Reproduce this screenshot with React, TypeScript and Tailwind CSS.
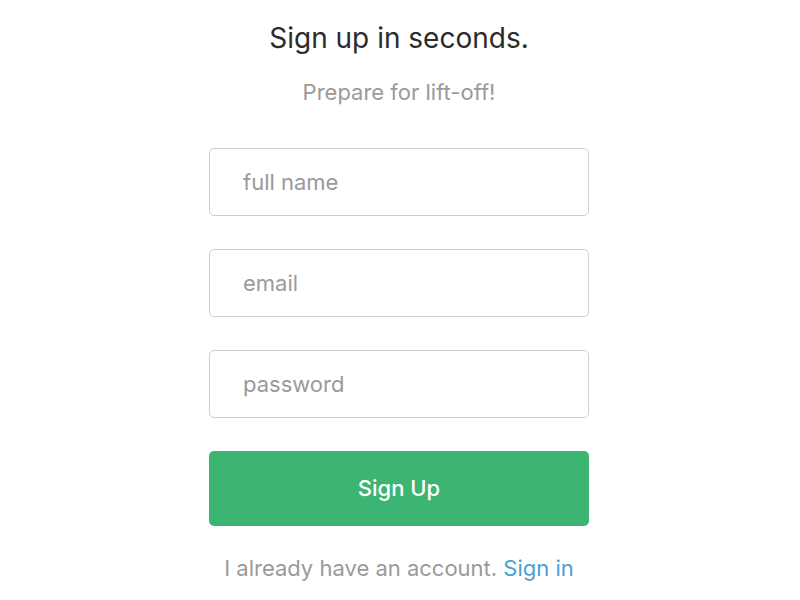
import React from 'react';

const Field = (props: { placeholder: string; type?: string }) => {
  return (
    <input
      type={props.type || 'text'}
      placeholder={props.placeholder}
      className="block w-full h-[68px] rounded-[5px] border border-[#cfcfcf] bg-white px-[33px] text-[22px] text-[#333] placeholder:text-[#9a9a9a] outline-none"
    />
  );
};

export default function App() {
  return (
    <div
      className="min-h-[600px] bg-white flex flex-col items-center pr-[2px]"
      style={{ fontFamily: 'Inter, "Noto Sans", sans-serif' }}
    >
      <h1 className="mt-[20px] text-[28px] leading-[36px] text-[#2b2b2b]">Sign up in seconds.</h1>
      <p className="mt-[22px] text-[22px] leading-[28px] text-[#9a9a9a]">Prepare for lift-off!</p>
      <form className="mt-[42px] w-[380px] flex flex-col gap-[33px]" onSubmit={(e) => e.preventDefault()}>
        <Field placeholder="full name" />
        <Field placeholder="email" type="email" />
        <Field placeholder="password" type="password" />
        <button
          type="submit"
          className="h-[75px] w-full rounded-[5px] bg-[#3db572] text-white text-[22px] font-medium"
        >
          Sign Up
        </button>
      </form>
      <p className="mt-[27px] text-[22px] leading-[30px] text-[#9a9a9a]">
        I already have an account. <a href="#" className="text-[#4aa0d8]">Sign in</a>
      </p>
    </div>
  );
}
